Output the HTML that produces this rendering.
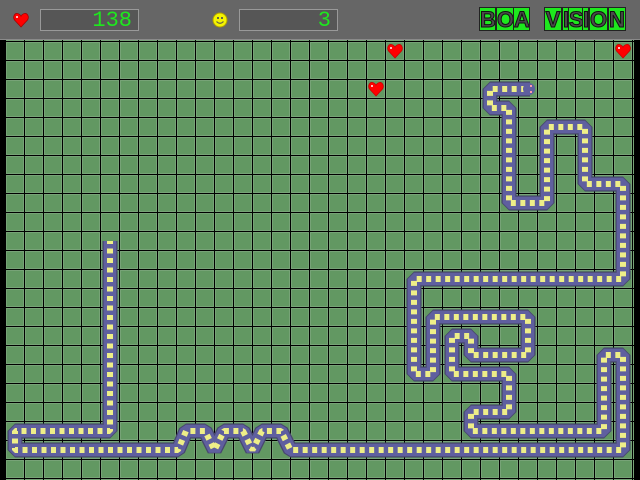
<!DOCTYPE html>
<html><head><meta charset="utf-8"><style>
html,body{margin:0;padding:0;width:640px;height:480px;overflow:hidden;background:#000;font-family:"Liberation Sans",sans-serif}
#hdr{position:absolute;left:0;top:0;width:640px;height:39px;background:#666;border-bottom:1px solid #8a8a8a}
.box{position:absolute;top:9px;width:97px;height:20px;background:#565656;border:1px solid #999;color:#1ee81e;font-family:"Liberation Mono",monospace;font-size:22px;line-height:22px;text-align:right;box-sizing:content-box}
.box span{padding-right:6px}
.lt{position:absolute;top:7px;height:24px;background:#1ee81e;border:1px solid #222;box-sizing:border-box;font-weight:bold;font-size:22px;line-height:24px;text-align:center;color:#4a4a4a;-webkit-text-stroke:1px #111;font-family:"Liberation Sans",sans-serif;overflow:hidden}
</style></head><body>
<div id="hdr">
<svg style="position:absolute;left:13px;top:12px" width="16" height="16" viewBox="0 0 16 16"><path d="M8 15 L1.5 8 C-0.5 5 1.5 1 4.5 1.5 C6 1.8 7.3 3 8 4.2 C8.7 3 10 1.8 11.5 1.5 C14.5 1 16.5 5 14.5 8 Z" fill="#f00" stroke="#a00" stroke-width="0.8"/><rect x="3" y="4" width="2" height="2" fill="#fbb"/></svg>
<div class="box" style="left:40px"><span>138</span></div>
<svg style="position:absolute;left:212px;top:12px" width="16" height="16" viewBox="0 0 16 16"><circle cx="8" cy="8" r="7" fill="#f4f400" stroke="#b0a000" stroke-width="1"/><rect x="5" y="5" width="2" height="2" fill="#664"/><rect x="9" y="5" width="2" height="2" fill="#664"/><path d="M4.5 9.5 Q8 13 11.5 9.5" stroke="#664" stroke-width="1.2" fill="none"/></svg>
<div class="box" style="left:239px"><span>3</span></div>
<div class="lt" style="left:479px;width:17px">B</div>
<div class="lt" style="left:496px;width:18px">O</div>
<div class="lt" style="left:513px;width:17px">A</div>
<div class="lt" style="left:544px;width:18px">V</div>
<div class="lt" style="left:562px;width:7px">I</div>
<div class="lt" style="left:568px;width:15px">S</div>
<div class="lt" style="left:582px;width:7px">I</div>
<div class="lt" style="left:589px;width:19px">O</div>
<div class="lt" style="left:608px;width:18px">N</div>
</div>
<svg style="position:absolute;left:0;top:0" width="640" height="480">
<defs>
<pattern id="g" patternUnits="userSpaceOnUse" x="5" y="41" width="19" height="19">
<rect width="19" height="19" fill="#000"/>
<rect x="1" y="1" width="18" height="18" fill="#629862"/>
<rect x="1.5" y="1.5" width="17" height="17" fill="none" stroke="#8cae8c" stroke-width="1" stroke-dasharray="1 1"/>
</pattern>
<symbol id="h" viewBox="0 0 16 16"><path d="M8 15 L1.5 8 C-0.5 5 1.5 1 4.5 1.5 C6 1.8 7.3 3 8 4.2 C8.7 3 10 1.8 11.5 1.5 C14.5 1 16.5 5 14.5 8 Z" fill="#f00" stroke="#c00" stroke-width="0.8"/><rect x="3" y="4" width="2" height="2" fill="#fbb"/></symbol>
<polyline id="sn" points="110,241 110,431 15,431 15,450 178,450 186,431 205,431 214.5,450 224,431 243,431 252.5,450 262,431 281,431 290.5,450 623,450 623,355 604,355 604,431 471,431 471,412 509,412 509,374 452,374 452,336 471,336 471,355 528,355 528,317 433,317 433,374 414,374 414,279 623,279 623,184 585,184 585,127 547,127 547,203 509,203 509,108 490,108 490,89 530,89"/>
</defs>
<rect x="5" y="40" width="629" height="440" fill="url(#g)"/>
<g fill="none" stroke-linejoin="bevel">
<use href="#sn" stroke="#48486e" stroke-width="15"/>
<use href="#sn" stroke="#5f5f9f" stroke-width="12.5"/>
<use href="#sn" stroke="#eeee88" stroke-width="6" stroke-dasharray="5 4.5" stroke-dashoffset="2"/>
</g>
<circle cx="529" cy="89" r="6" fill="#5f5f9f"/>
<rect x="530" y="85" width="2" height="2" fill="#f9a"/><rect x="530" y="91" width="2" height="2" fill="#f9a"/>
<use href="#h" x="387" y="43" width="16" height="16"/>
<use href="#h" x="615" y="43" width="16" height="16"/>
<use href="#h" x="368" y="81" width="16" height="16"/>
</svg>
</body></html>
